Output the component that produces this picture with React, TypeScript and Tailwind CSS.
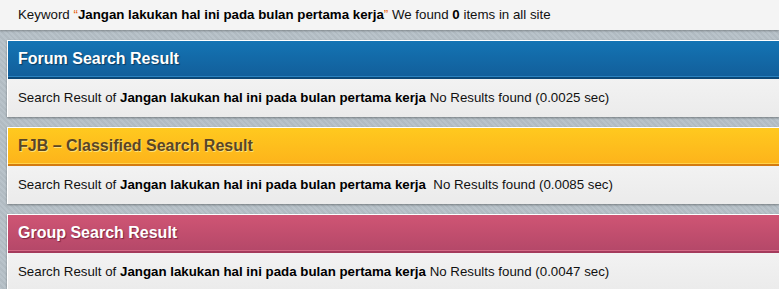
const keyword = 'Jangan lakukan hal ini pada bulan pertama kerja'

type Panel = {
    title: string
    head: string
    stripe: string
    titleStyle: string
    time: string
    gap?: boolean
}

const panels: Panel[] = [
    {
        title: 'Forum Search Result',
        head: 'bg-[linear-gradient(#1474b4,#125f9b)]',
        stripe: 'border-t border-t-[#2a82c0] bg-[#0c4877]',
        titleStyle: 'text-white [text-shadow:1px_1px_1px_#0a3a60]',
        time: '0.0025',
    },
    {
        title: 'FJB \u2013 Classified Search Result',
        head: 'bg-[linear-gradient(#ffc91f,#fdb41b)]',
        stripe: 'border-t border-t-[#ffd24a] bg-[#d37a10]',
        titleStyle: 'text-[#5a4624] [text-shadow:1px_1px_0_#ffe07a]',
        time: '0.0085',
        gap: true,
    },
    {
        title: 'Group Search Result',
        head: 'bg-[linear-gradient(#cf5574,#b54869)]',
        stripe: 'border-t border-t-[#d46a86] bg-[#a43a5c]',
        titleStyle: 'text-white [text-shadow:1px_1px_1px_#7a2540]',
        time: '0.0047',
    },
]

function ResultPanel({ p }: { p: Panel }) {
    return (
        <div className="ml-[7px] border-t border-l border-white shadow-[0_1px_2px_rgba(0,0,0,0.35)]">
            <div className={`${p.head} h-[35px] flex items-center pl-[10px]`}>
                <h2 className={`${p.titleStyle} font-bold text-[16px] leading-none`}>{p.title}</h2>
            </div>
            <div className={`${p.stripe} h-[3px]`}></div>
            <div className="h-[38px] flex items-center pl-[10px] bg-[linear-gradient(#f2f2f2,#ebebeb)] text-[13.3px] text-[#111]">
                <span>
                    Search Result of <b className="text-black">{keyword}</b>{p.gap ? '\u00a0 ' : ' '}No Results found ({p.time} sec)
                </span>
            </div>
        </div>
    )
}

export default function App() {
    return (
        <div className="w-[779px] h-[289px] overflow-hidden font-['Liberation_Sans',Arial,sans-serif] bg-[#b5bfc6] bg-[repeating-linear-gradient(45deg,#b9c3ca_0px,#b9c3ca_2px,#b1bbc2_2px,#b1bbc2_4px)]">
            <div className="h-[30px] bg-[#f4f4f4] flex items-center pl-[18px] text-[13.3px] text-[#111] shadow-[0_1px_2px_rgba(0,0,0,0.3)]">
                <span>
                    Keyword <span className="text-[#e8600a]">“</span>
                    <b className="text-black">{keyword}</b>
                    <span className="text-[#e8600a]">”</span> We found <b className="text-black">0</b> items in all site
                </span>
            </div>
            <div className="flex flex-col gap-[10px] pt-[10px]">
                {panels.map((p) => (
                    <ResultPanel key={p.title} p={p} />
                ))}
            </div>
        </div>
    )
}
